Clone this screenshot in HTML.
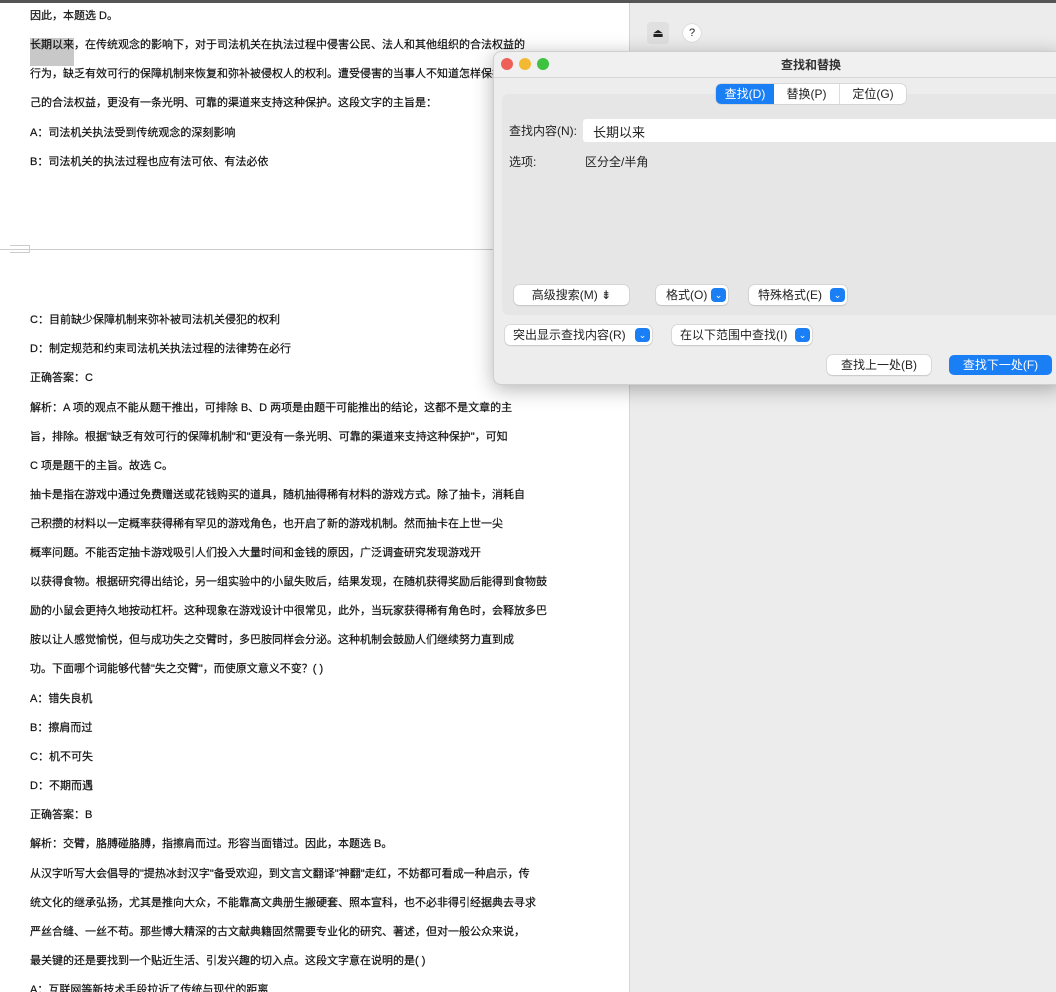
<!DOCTYPE html>
<html><head><meta charset="utf-8"><style>
*{margin:0;padding:0;box-sizing:border-box}
body{width:1056px;height:992px;overflow:hidden;background:#ececec;position:relative;font-family:"Liberation Sans","Noto Sans CJK SC",sans-serif;color:#222}
#doc{position:absolute;left:0;top:0;width:630px;height:992px;background:#fff;overflow:hidden;border-right:1px solid #d6d6d6}
.l{position:absolute;left:30px;font-size:11px;white-space:nowrap;line-height:16px;color:#111;-webkit-text-stroke:0.2px #111}
#topbar{position:absolute;left:0;top:0;width:1056px;height:3px;background:#555}
.hl{background:#c8c8c8;position:absolute;left:30px;top:38px;width:44px;height:28px}
#dlg{position:absolute;left:493px;top:51px;width:570px;height:334px;background:#ededed;border-radius:8px;box-shadow:0 4px 20px rgba(0,0,0,.3);border:1px solid #cfcfcf}
.tl{position:absolute;top:6px;width:12px;height:12px;border-radius:50%}
.t{position:absolute;font-size:12px;white-space:nowrap}
.btn{position:absolute;background:#fff;border-radius:5px;box-shadow:0 0 0 .5px #c4c4c4,0 1px 1px rgba(0,0,0,.15);font-size:12px;height:20px;line-height:20px;white-space:nowrap}
.chev{position:absolute;right:2px;top:3px;width:15px;height:14px;border-radius:4px;background:#1a7ef5;color:#fff;font-size:9px;line-height:14px;text-align:center}
</style></head><body>
<div id="doc">
<div class="hl"></div>
<div class="l" style="top:8px">因此，本题选 D。</div>
<div class="l" style="top:37px">长期以来，在传统观念的影响下，对于司法机关在执法过程中侵害公民、法人和其他组织的合法权益的</div>
<div class="l" style="top:66px">行为，缺乏有效可行的保障机制来恢复和弥补被侵权人的权利。遭受侵害的当事人不知道怎样保护自</div>
<div class="l" style="top:95px">己的合法权益，更没有一条光明、可靠的渠道来支持这种保护。这段文字的主旨是：</div>
<div class="l" style="top:125px">A：司法机关执法受到传统观念的深刻影响</div>
<div class="l" style="top:154px">B：司法机关的执法过程也应有法可依、有法必依</div>
<div style="position:absolute;left:0;top:249px;width:630px;height:1px;background:#ccc"></div>
<div style="position:absolute;left:10px;top:245px;width:20px;height:8px;border:1px solid #ccc;border-left:none"></div>
<div class="l" style="top:312px">C：目前缺少保障机制来弥补被司法机关侵犯的权利</div>
<div class="l" style="top:341px">D：制定规范和约束司法机关执法过程的法律势在必行</div>
<div class="l" style="top:370px">正确答案：C</div>
<div class="l" style="top:400px">解析：A 项的观点不能从题干推出，可排除 B、D 两项是由题干可能推出的结论，这都不是文章的主</div>
<div class="l" style="top:429px">旨，排除。根据"缺乏有效可行的保障机制"和"更没有一条光明、可靠的渠道来支持这种保护"，可知</div>
<div class="l" style="top:458px">C 项是题干的主旨。故选 C。</div>
<div class="l" style="top:487px">抽卡是指在游戏中通过免费赠送或花钱购买的道具，随机抽得稀有材料的游戏方式。除了抽卡，消耗自</div>
<div class="l" style="top:516px">己积攒的材料以一定概率获得稀有罕见的游戏角色，也开启了新的游戏机制。然而抽卡在上世一尖</div>
<div class="l" style="top:545px">概率问题。不能否定抽卡游戏吸引人们投入大量时间和金钱的原因，广泛调查研究发现游戏开</div>
<div class="l" style="top:574px">以获得食物。根据研究得出结论，另一组实验中的小鼠失败后，结果发现，在随机获得奖励后能得到食物鼓</div>
<div class="l" style="top:603px">励的小鼠会更持久地按动杠杆。这种现象在游戏设计中很常见，此外，当玩家获得稀有角色时，会释放多巴</div>
<div class="l" style="top:632px">胺以让人感觉愉悦，但与成功失之交臂时，多巴胺同样会分泌。这种机制会鼓励人们继续努力直到成</div>
<div class="l" style="top:661px">功。下面哪个词能够代替"失之交臂"，而使原文意义不变？( )</div>
<div class="l" style="top:691px">A：错失良机</div>
<div class="l" style="top:720px">B：擦肩而过</div>
<div class="l" style="top:749px">C：机不可失</div>
<div class="l" style="top:778px">D：不期而遇</div>
<div class="l" style="top:807px">正确答案：B</div>
<div class="l" style="top:836px">解析：交臂，胳膊碰胳膊，指擦肩而过。形容当面错过。因此，本题选 B。</div>
<div class="l" style="top:866px">从汉字听写大会倡导的"提热冰封汉字"备受欢迎，到文言文翻译"神翻"走红，不妨都可看成一种启示，传</div>
<div class="l" style="top:895px">统文化的继承弘扬，尤其是推向大众，不能靠高文典册生搬硬套、照本宣科，也不必非得引经据典去寻求</div>
<div class="l" style="top:924px">严丝合缝、一丝不苟。那些博大精深的古文献典籍固然需要专业化的研究、著述，但对一般公众来说，</div>
<div class="l" style="top:953px">最关键的还是要找到一个贴近生活、引发兴趣的切入点。这段文字意在说明的是( )</div>
<div class="l" style="top:982px">A：互联网等新技术手段拉近了传统与现代的距离</div>
</div>
<div id="topbar"></div>
<div style="position:absolute;left:647px;top:22px;width:22px;height:22px;background:#e0e0e0;border-radius:4px;font-size:12px;text-align:center;line-height:22px">⏏</div>
<div style="position:absolute;left:683px;top:24px;width:18px;height:18px;background:#fff;border-radius:50%;font-size:11px;text-align:center;line-height:18px;box-shadow:0 0 1px #999">?</div>
<div id="dlg">
<div style="position:absolute;left:0;top:0;right:0;height:26px;border-bottom:1px solid #d8d8d8;background:#f0f0f0;border-radius:8px 8px 0 0"></div>
<div class="tl" style="left:7px;background:#ed5f57"></div>
<div class="tl" style="left:25px;background:#f4b932"></div>
<div class="tl" style="left:43px;background:#3fc142"></div>
<div class="t" style="left:287px;top:4px;font-weight:bold;color:#333">查找和替换</div>
<div style="position:absolute;left:8px;top:42px;width:570px;height:221px;background:#e6e6e6;border-radius:6px"></div>
<div style="position:absolute;left:222px;top:32px;width:190px;height:20px;background:#fff;border-radius:5px;box-shadow:0 0 0 .5px #c4c4c4;font-size:12px;line-height:20px">
<div style="position:absolute;left:0;width:58px;height:20px;background:#1a7ef5;color:#fff;text-align:center;border-radius:5px 0 0 5px">查找(D)</div>
<div style="position:absolute;left:58px;width:66px;text-align:center;border-right:1px solid #ddd">替换(P)</div>
<div style="position:absolute;left:124px;width:66px;text-align:center">定位(G)</div>
</div>
<div class="t" style="left:15px;top:70px">查找内容(N):</div>
<div style="position:absolute;left:89px;top:67px;width:490px;height:23px;background:#fff;border-radius:3px"></div>
<div class="t" style="left:99px;top:70px;font-size:13px">长期以来</div>
<div class="t" style="left:15px;top:101px">选项:</div>
<div class="t" style="left:91px;top:101px">区分全/半角</div>
<div class="btn" style="left:20px;top:233px;width:115px;text-align:center">高级搜索(M) ⇟</div>
<div class="btn" style="left:162px;top:233px;width:72px;padding-left:10px">格式(O)<span class="chev">⌄</span></div>
<div class="btn" style="left:255px;top:233px;width:98px;padding-left:9px">特殊格式(E)<span class="chev">⌄</span></div>
<div class="btn" style="left:11px;top:273px;width:147px;padding-left:8px">突出显示查找内容(R)<span class="chev">⌄</span></div>
<div class="btn" style="left:178px;top:273px;width:140px;padding-left:8px">在以下范围中查找(I)<span class="chev">⌄</span></div>
<div class="btn" style="left:333px;top:303px;width:104px;text-align:center">查找上一处(B)</div>
<div class="btn" style="left:455px;top:303px;width:103px;text-align:center;background:#1a7ef5;color:#fff;box-shadow:none">查找下一处(F)</div>
</div>
</body></html>
